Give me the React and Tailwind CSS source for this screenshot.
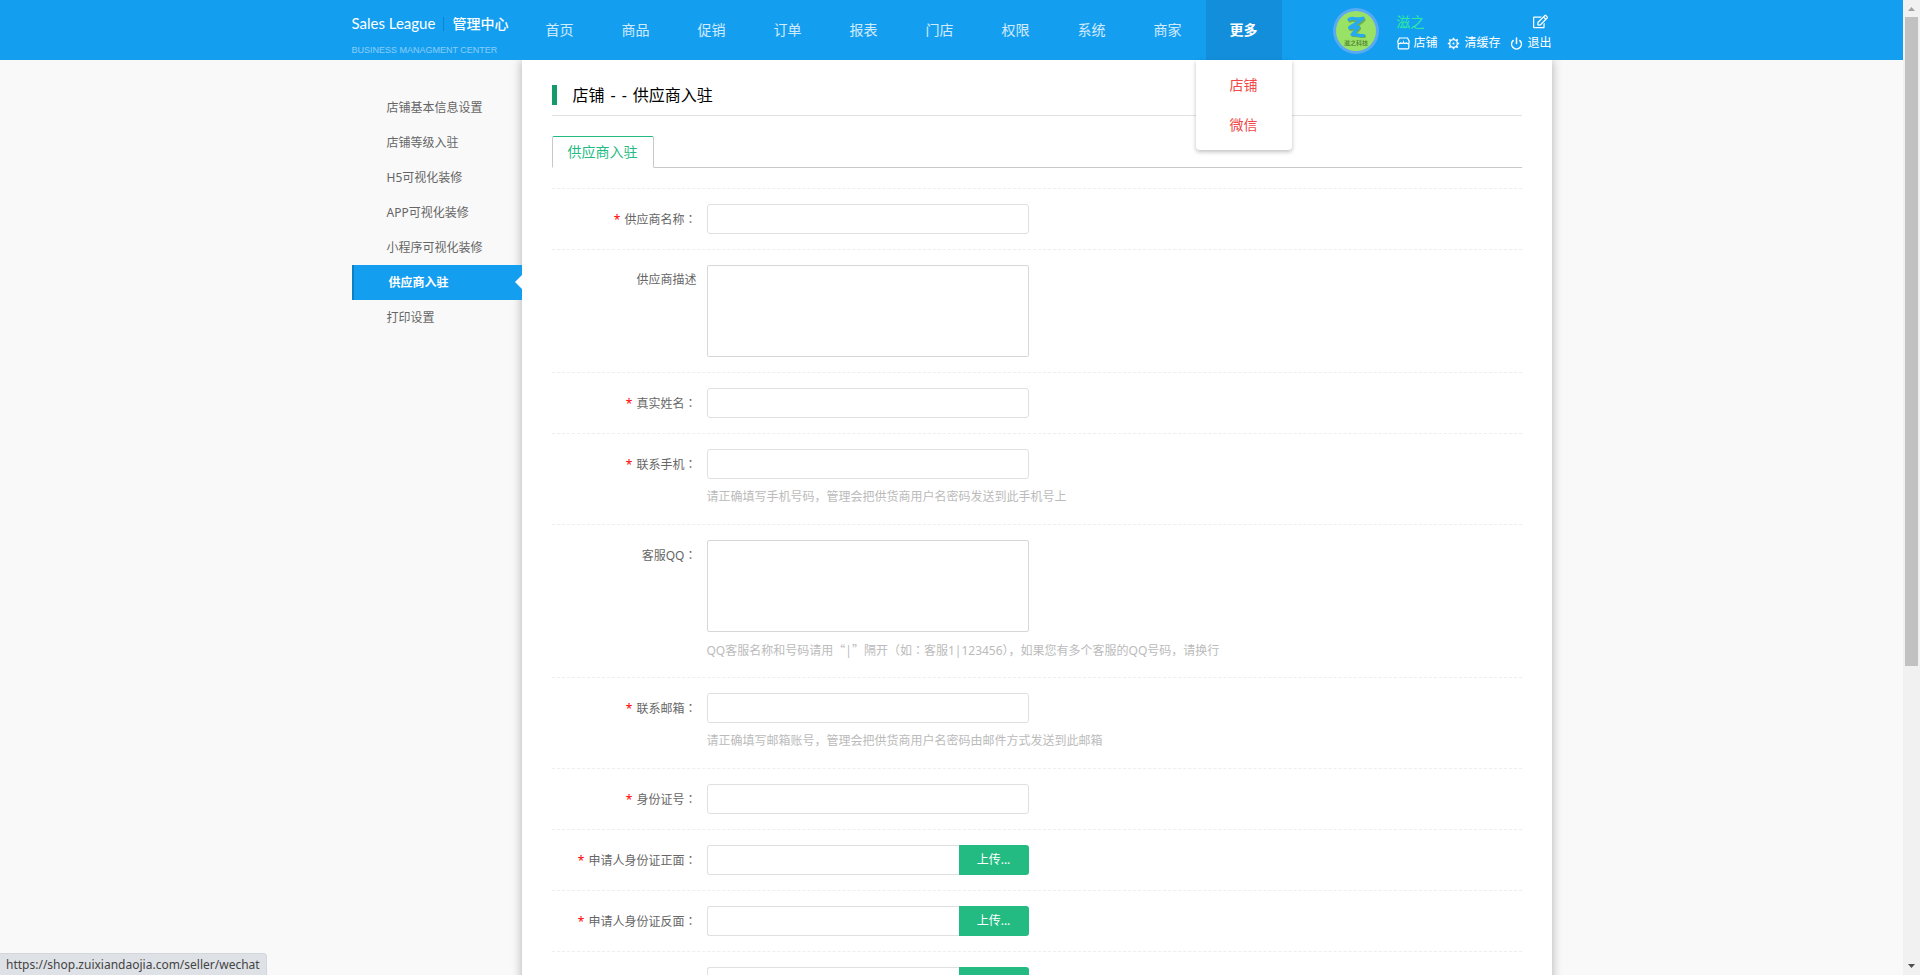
import { FiPower } from 'react-icons/fi';
import { FaRegEdit } from 'react-icons/fa';

const navItems = ['首页', '商品', '促销', '订单', '报表', '门店', '权限', '系统', '商家'];

const sideItems = [
  '店铺基本信息设置',
  '店铺等级入驻',
  'H5可视化装修',
  'APP可视化装修',
  '小程序可视化装修',
  '供应商入驻',
  '打印设置',
];

const fields = [
  { id: 'name', label: '供应商名称', colon: true, required: true },
  { id: 'desc', label: '供应商描述', type: 'textarea' },
  { id: 'realname', label: '真实姓名', colon: true, required: true },
  { id: 'mobile', label: '联系手机', colon: true, required: true, hint: '请正确填写手机号码，管理会把供货商用户名密码发送到此手机号上' },
  {
    id: 'qq',
    label: '客服QQ',
    colon: true,
    type: 'textarea',
    hint: (
      <>
        QQ客服名称和号码请用<Cjk>“</Cjk>|<Cjk>”</Cjk>隔开（如<Colon />客服1|123456），如果您有多个客服的QQ号码，请换行
      </>
    ),
  },
  { id: 'email', label: '联系邮箱', colon: true, required: true, hint: '请正确填写邮箱账号，管理会把供货商用户名密码由邮件方式发送到此邮箱' },
  { id: 'idcard', label: '身份证号', colon: true, required: true },
  { id: 'idfront', label: '申请人身份证正面', colon: true, required: true, type: 'upload' },
  { id: 'idback', label: '申请人身份证反面', colon: true, required: true, type: 'upload' },
  { id: 'license', type: 'upload', ariaLabel: '营业执照' },
];

// Full-width quotes
function Cjk({ children }) {
  return <span className="font-['Noto_Sans_CJK_SC',sans-serif]">{children}</span>;
}

// Colon centred in its cell
function Colon() {
  return <span className="font-['Noto_Sans_CJK_TC',sans-serif]">：</span>;
}

function ShopIcon() {
  return (
    <svg viewBox="0 0 13 13" className="size-[13px]" fill="none" stroke="currentColor" strokeWidth="1.2">
      <path d="M2.4 1h8.2l1.6 3.2v1.1a1.4 1.4 0 0 1-2.8 0 1.5 1.5 0 0 1-2.9 0 1.5 1.5 0 0 1-2.9 0 1.4 1.4 0 0 1-2.8 0V4.2z" />
      <path d="M1.2 6.5v4.3c0 .6.4 1 1 1h8.6c.6 0 1-.4 1-1V6.5" />
    </svg>
  );
}

function GearIcon() {
  return (
    <svg viewBox="0 0 13 13" className="size-[13px]" fill="none" stroke="currentColor">
      <circle cx="6.5" cy="6.5" r="3.8" strokeWidth="1.3" />
      <circle cx="6.5" cy="6.5" r="1" fill="currentColor" stroke="none" />
      <path
        strokeWidth="1.7"
        d="M6.5 .8v1.700M6.500 10.500v1.700M.8 6.500h1.700M10.500 6.500h1.700M2.300 2.300l1.300 1.300M9.400 9.400l1.300 1.300M2.300 10.700l1.300-1.300M9.400 3.600l1.300-1.300"
      />
    </svg>
  );
}

function Avatar() {
  return (
    <svg viewBox="0 0 46 46" className="size-[46px]">
      <circle cx="23" cy="23" r="23" fill="#5aa9f3" />
      <circle cx="23" cy="23" r="20" fill="#99e265" />
      <g fill="none" strokeLinecap="round" strokeLinejoin="round" strokeWidth="3.2">
        <path d="M17 13c3-2.500 6 1 14-1-3 3.500-9 6-13.500 9.200 2.500.6 5-1 9-1-1.500 3-4.500 4.500-6.500 7.300 3-1 6 1.500 11.500.8" stroke="#6fae4c" />
        <path d="M16 11.500c3-3 6 1 14-1.300-3 3.500-9 6-13.500 9.600 2.500.6 5-1.200 9-1-1.500 3-4.500 5-6.500 7.800 3-1 6 1.700 11.500.9" stroke="#27aaf0" />
      </g>
      <text x="23" y="37" textAnchor="middle" fontSize="6" fontWeight="500" fill="#4d7a35" fontFamily="Noto Sans CJK SC">
        滋之科技
      </text>
    </svg>
  );
}

function Header() {
  return (
    <header className="relative z-20 bg-[#149ef0] text-white">
      <div className="mx-auto flex h-[60px] w-[1200px]">
        <div className="w-[170px] shrink-0 pt-3">
          <div className="flex h-6 items-center whitespace-nowrap">
            <span className="font-['Lato',sans-serif] text-[15px]">Sales League</span>
            <span className="mx-2 h-3.5 w-px bg-[#0d86cf]" />
            <span className="text-sm font-medium">管理中心</span>
          </div>
          <p className="mt-1 font-['Liberation_Sans',sans-serif] text-[9px] leading-5 text-white/50">BUSINESS MANAGMENT CENTER</p>
        </div>

        <nav className="flex text-sm leading-[60px]">
          {navItems.map((item) => (
            <a key={item} href="#" className="w-19 text-center text-white/80">
              {item}
            </a>
          ))}
          <div className="relative w-19 bg-[#128edb] text-center">
            <a href="#" className="block font-bold">更多</a>
            <div className="absolute top-full -left-2.5 w-24 rounded-b bg-white py-[5px] leading-10 text-[#f04848] shadow-[0_2px_4px_rgba(0,0,0,0.25)]">
              <a href="#" className="block">店铺</a>
              <a href="#" className="block">微信</a>
            </div>
          </div>
        </nav>

        <div className="ml-auto flex w-[219px] gap-[18px] pt-2">
          <Avatar />
          <div className="flex-1 text-xs">
            <div className="flex h-[27px] items-center justify-between pr-1">
              <span className="text-sm text-[#2deaa0]">滋之</span>
              <a href="#" aria-label="编辑"><FaRegEdit className="size-[15px]" /></a>
            </div>
            <div className="flex h-4 items-center justify-between whitespace-nowrap">
              <a href="#" className="flex items-center gap-1"><ShopIcon />店铺</a>
              <a href="#" className="flex items-center gap-1"><GearIcon />清缓存</a>
              <a href="#" className="flex items-center gap-1"><FiPower strokeWidth={2.8} className="size-[13px]" />退出</a>
            </div>
          </div>
        </div>
      </div>
    </header>
  );
}

function Sidebar() {
  return (
    <aside className="w-[170px] shrink-0 pt-[30px] text-xs leading-[35px] text-[#666]">
      {sideItems.map((item) =>
        item === '供应商入驻' ? (
          <a key={item} href="#" className="relative z-10 block border-l-2 border-[#0d80c6] bg-[#149ef0] pl-[35px] font-bold text-white">
            {item}
            <svg viewBox="0 0 7 14" className="absolute top-[10px] right-0 h-3.5 w-[7px]">
              <path d="M7 0v14L0 7z" fill="#fff" />
            </svg>
          </a>
        ) : (
          <a key={item} href="#" className="block pl-[35px]">
            {item}
          </a>
        )
      )}
    </aside>
  );
}

function Field({ field }) {
  const { id, label, colon, required, type, hint, ariaLabel } = field;

  return (
    <div className="flex border-t border-dashed border-[#eee] py-[15px]">
      <label htmlFor={id} className="mr-2.5 h-[30px] w-[145px] shrink-0 text-right leading-[30px] text-[#666]">
        {required && <span className="mr-1 text-[#f00]">*</span>}
        {label}
        {colon && <Colon />}
      </label>
      <div>
        {type === 'textarea' && (
          <textarea id={id} className="block h-[92px] w-[322px] resize-none rounded-xs border border-[#d7d7d7] bg-white" />
        )}
        {type === 'upload' && (
          <div className="flex h-[30px] w-[322px]">
            <input id={id} type="text" aria-label={ariaLabel} className="min-w-0 flex-1 rounded-l-[3px] border border-r-0 border-[#e0e0e0] bg-white px-2" />
            <button type="button" className="w-[70px] rounded-r-[3px] bg-[#24bb83] text-white">上传...</button>
          </div>
        )}
        {!type && (
          <input id={id} type="text" className="block h-[30px] w-[322px] rounded-[3px] border border-[#e0e0e0] bg-white px-2" />
        )}
        {hint && <p className="h-[30px] pt-1.5 leading-6 text-[#bbb]">{hint}</p>}
      </div>
    </div>
  );
}

function Scrollbar() {
  return (
    <div className="flex w-[17px] shrink-0 flex-col items-center bg-[#f1f1f1]">
      <svg viewBox="0 0 17 17" className="size-[17px]"><path d="M5 11h7L8.5 7z" fill="#a3a3a3" /></svg>
      <div className="flex w-[13px] flex-1 flex-col">
        <div className="h-[69%] bg-[#c1c1c1]" />
      </div>
      <svg viewBox="0 0 17 17" className="size-[17px]"><path d="M5 6h7L8.5 10z" fill="#505050" /></svg>
    </div>
  );
}

export default function App() {
  return (
    <div className="flex h-screen overflow-hidden bg-[#f9f9f9] font-['Noto_Sans','Noto_Sans_CJK_SC',sans-serif] text-xs">
      <div className="flex min-w-0 flex-1 flex-col">
        <Header />
        <div className="mx-auto flex min-h-0 w-[1200px] flex-1">
          <Sidebar />
          <main className="flex-1 self-start bg-white px-[30px] pt-[25px] pb-10 shadow-[0_0_10px_rgba(0,0,0,0.3)]">
            <div className="flex border-b border-[#e1e1e1] pb-2.5">
              <h1 className="flex gap-1.5 border-l-[5px] border-[#149a6b] pl-4 text-base leading-5 text-black">
                <span>店铺</span>
                <span>-</span>
                <span>-</span>
                <span>供应商入驻</span>
              </h1>
            </div>
            <div className="mt-5 flex border-b border-[#c8c8c8]">
              <a href="#" className="-mb-px rounded-t-xs border border-t-[#24bb83] border-r-[#c8c8c8] border-b-white border-l-[#c8c8c8] bg-white px-[15px] text-sm leading-[30px] text-[#24bb83]">
                供应商入驻
              </a>
            </div>
            <form className="mt-5">
              {fields.map((field) => (
                <Field key={field.id} field={field} />
              ))}
            </form>
          </main>
        </div>
      </div>
      <Scrollbar />
      {/* Link preview */}
      <div className="fixed bottom-0 left-0 z-30 rounded-tr border-t border-r border-[#d3d6da] bg-[#dee1e6] px-1.5 leading-[21px] text-[#444]">
        https://shop.zuixiandaojia.com/seller/wechat
      </div>
    </div>
  );
}
